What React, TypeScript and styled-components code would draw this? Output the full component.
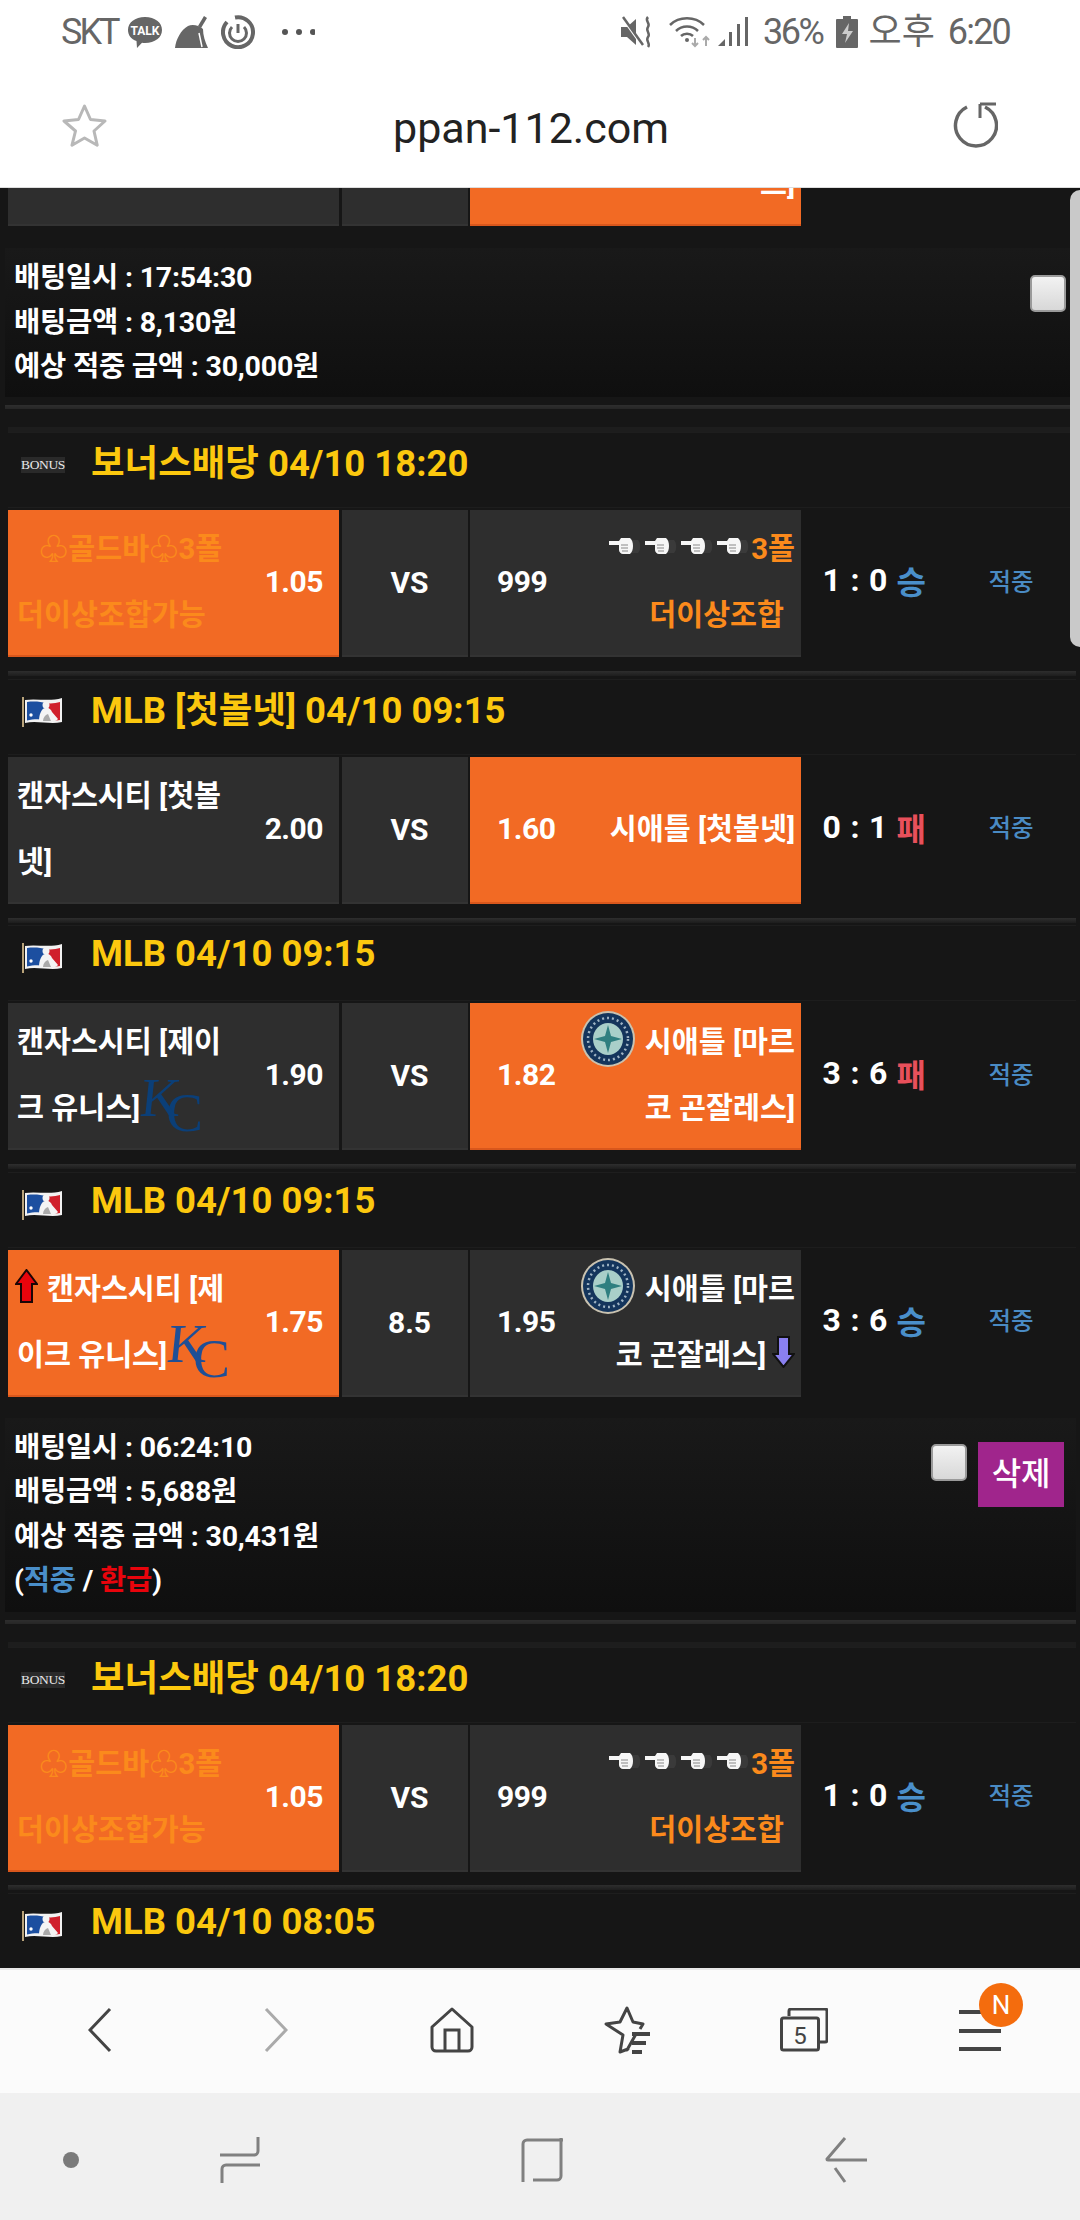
import React from "react";
import styled, { createGlobalStyle } from "styled-components";

const Global = createGlobalStyle`
  html, body { margin: 0; padding: 0; background: #161616; }
  * { box-sizing: border-box; }
  #root { width: 1080px; height: 2220px; overflow: hidden; }
`;

const Screen = styled.div`
  width: 1080px;
  height: 2220px;
  display: flex;
  flex-direction: column;
  font-family: Roboto, "Noto Sans CJK KR", sans-serif;
  overflow: hidden;
  position: relative;
`;
const Ic = styled.svg<{ $ml?: number; $mr?: number }>`
  display: block;
  flex: none;
  margin-left: ${(p) => p.$ml ?? 0}px;
  margin-right: ${(p) => p.$mr ?? 0}px;
`;
const StatusBar = styled.div`
  height: 66px;
  flex: none;
  background: #fff;
  color: #666;
  display: flex;
  justify-content: space-between;
  align-items: center;
  padding: 0 70px 2px 61px;
  font-size: 36px;
  font-weight: 400;
`;
const StatusGroup = styled.div`
  display: flex;
  align-items: center;
`;
const StatusText = styled.span<{ $ml?: number; $ls?: number }>`
  letter-spacing: ${(p) => p.$ls ?? -2.4}px;
  line-height: 40px;
  margin-left: ${(p) => p.$ml ?? 0}px;
`;
const UrlBar = styled.div`
  height: 122px;
  flex: none;
  background: #fff;
  display: grid;
  grid-template-columns: 62px 45px 1fr 45px 82px;
  align-items: center;
  border-bottom: 1px solid #ddd;
  padding-bottom: 3px;
`;
const UrlText = styled.div`
  text-align: center;
  color: #222;
  font-size: 43px;
  padding: 5px 0 0 2px;
`;
const Spacer = styled.span``;
const Scroll = styled.div`
  flex: 1;
  background: #161616;
  overflow: hidden;
  min-height: 0;
  position: relative;
`;
const ScrollTrack = styled.div`
  margin-top: -109px;
  padding-left: 8px;
  padding-right: 7px;
`;
const Thumb = styled.div`
  position: absolute;
  top: 2px;
  right: 0;
  width: 10px;
  height: 457px;
  background: #c9c9c9;
  border-radius: 12px 0 0 12px;
`;
const Row = styled.div`
  display: grid;
  grid-template-columns: 331px 126px 331px 1fr;
  column-gap: 2.5px;
  height: 147px;
  color: #fff;
  font-weight: 700;
  font-size: 30px;
`;
const Team = styled.div<{ $on?: boolean; $right?: boolean }>`
  background: ${(p) => (p.$on ? "#f26a24" : "#2e2e2e")};
  border-bottom: 2px solid ${(p) => (p.$on ? "#d9571c" : "#333")};
  display: flex;
  align-items: center;
  justify-content: space-between;
  flex-direction: ${(p) => (p.$right ? "row-reverse" : "row")};
  padding: 0 ${(p) => (p.$right ? "6px" : "16px")} 0 ${(p) => (p.$right ? "27px" : "9px")};
`;
const Mid = styled.div`
  background: #2e2e2e;
  border-bottom: 2px solid #333;
  display: flex;
  align-items: center;
  justify-content: center;
  padding-left: 10px;
`;
const Name = styled.div<{ $right?: boolean }>`
  display: flex;
  flex-direction: column;
  align-items: ${(p) => (p.$right ? "flex-end" : "flex-start")};
  font-size: 29.300px;
  white-space: nowrap;
  padding-bottom: 7px;
`;
const NameLine = styled.div<{ $indent?: number; $tail?: number; $gold?: boolean }>`
  display: flex;
  align-items: center;
  height: 66px;
  margin-left: ${(p) => p.$indent ?? 0}px;
  margin-right: ${(p) => p.$tail ?? 0}px;
  color: ${(p) => (p.$gold ? "#fb8a1c" : "inherit")};
`;
const Odds = styled.div`
  letter-spacing: -0.5px;
  padding-bottom: 2px;
`;
const Score = styled.div`
  display: flex;
  align-items: center;
  padding: 0 0 7px 19px;
  font-size: 32px;
`;
const ScoreText = styled.span`
  width: 74px;
  white-space: nowrap;
  letter-spacing: 0.8px;
`;
const Outcome = styled.span<{ $win: boolean }>`
  width: 92px;
  color: ${(p) => (p.$win ? "#4a8fca" : "#e8505b")};
`;
const Hit = styled.span`
  color: #4a8bc4;
  font-size: 24.500px;
  font-weight: 500;
`;
const Header = styled.div`
  height: 76px;
  margin: 0 -3px 2px 0;
  background: #161616;
  border-top: 1px solid #1e1e1e;
  border-bottom: 1px solid #1d1d1d;
  display: flex;
  align-items: center;
  padding: 0 0 19px 13px;
  color: #fcc80e;
  font-size: 36.500px;
  font-weight: 700;
`;
const HeaderIcon = styled.span`
  width: 44px;
  margin-right: 26px;
  display: flex;
  justify-content: center;
`;
const FlagIcon = styled.span`
  display: flex;
  padding-top: 9px;
`;
const BonusBadge = styled.span`
  background: #2a2a2a;
  color: #e8e8e8;
  font-family: "Liberation Serif", serif;
  font-size: 13.500px;
  font-weight: 400;
  line-height: 16px;
  width: 45px;
  text-align: center;
  letter-spacing: -0.4px;
  margin-top: 9px;
`;
const Separator = styled.div<{ $above: number; $below: number }>`
  height: 5px;
  margin: ${(p) => p.$above}px -3px ${(p) => p.$below}px 0;
  background: linear-gradient(#2e2e2e, #1d1d1d);
`;
const PanelSeparator = styled.div`
  height: 4px;
  margin: 8px -3px 18px -3px;
  background: linear-gradient(#2e2e2e, #262626);
`;
const Faint = styled.div`
  height: 5px;
  margin-right: -3px;
  background: #1d1d1d;
`;
const Panel = styled.div<{ $h: number; $top: number }>`
  height: ${(p) => p.$h}px;
  background: linear-gradient(#191919, #0f0f0f);
  color: #fff;
  font-size: 28.500px;
  font-weight: 700;
  line-height: 44.600px;
  padding: 7px 12px 0 9px;
  margin: ${(p) => p.$top}px -3px 0 -3px;
  display: flex;
  justify-content: space-between;
  letter-spacing: -0.2px;
`;
const PanelText = styled.div`
  padding-top: 1px;
`;
const PanelGroup = styled.div`
  display: flex;
  align-items: flex-start;
  gap: 11px;
  padding-top: 18px;
`;
const CheckBox = styled.div<{ $mr?: number }>`
  width: 36px;
  height: 37px;
  margin-top: 1.500px;
  margin-right: ${(p) => p.$mr ?? 0}px;
  background: linear-gradient(#f2f2f2, #d8d8d8);
  border: 2px solid #9a9a9a;
  border-radius: 5px;
`;
const DeleteBtn = styled.div`
  width: 86px;
  height: 65px;
  margin-top: -1px;
  background: #a0258c;
  color: #fff;
  font-size: 32px;
  font-weight: 500;
  display: flex;
  align-items: center;
  justify-content: center;
`;
const Link = styled.span<{ $c: string }>`
  color: ${(p) => p.$c};
`;
const KCMark = styled.span<{ $c: string }>`
  display: flex;
  width: 57px;
  height: 53px;
  font-family: "Liberation Serif", serif;
  font-size: 55px;
  font-weight: 400;
  line-height: 38px;
  color: ${(p) => p.$c};
`;
const KLetter = styled.span`
  width: 26px;
  transform: skewX(-6deg);
`;
const CLetter = styled.span`
  padding-top: 15px;
`;
const LogoSlot = styled.span`
  display: flex;
  margin-right: 10px;
`;
const Hands = styled.span`
  display: inline-flex;
  gap: 4px;
  margin-right: 2px;
`;
const Nav = styled.div`
  height: 125px;
  flex: none;
  background: #fbfbfb;
  border-top: 2px solid #e8e8e8;
  display: grid;
  grid-template-columns: repeat(6, 176px);
  padding: 0 0 3px 12px;
  align-items: center;
  justify-items: center;
`;
const MenuWrap = styled.div`
  position: relative;
  width: 42px;
  height: 44px;
`;
const Badge = styled.span`
  position: absolute;
  left: 20px;
  top: -25px;
  width: 44px;
  height: 44px;
  border-radius: 50%;
  background: #f46c0d;
  color: #fff;
  font-size: 26px;
  display: flex;
  align-items: center;
  justify-content: center;
`;
const SysNav = styled.div`
  height: 127px;
  flex: none;
  background: #f0f0f0;
  display: flex;
  align-items: center;
  padding: 7px 0 0 63px;
`;

const Flag = () => (
  <svg width="42" height="30" viewBox="0 0 42 30">
    <rect x="0" y="0" width="2" height="30" fill="#b9a37a" />
    <path d="M3 3c12-2 24 2 37-2v24c-12 3-25-2-37 1z" fill="#f2f2f2" />
    <path d="M5 5c8-1 14 0 19 1v17c-6-1-13-1-19 .5z" fill="#1c4fa0" />
    <path d="M24 6c5 1 10 0 14-1v18c-5 1-9 1-14 0z" fill="#d0202c" />
    <circle cx="9" cy="18" r="1.700" fill="#fff" />
    <circle cx="24" cy="8" r="3.500" fill="#f4f4f4" />
    <path d="M17 24c0-6 2-12 6-13 3-1 6 1 7 4l6 7c-1 1-2 2-3 2z" fill="#f4f4f4" />
    <path d="M21 24c0-3 2-6 5-7l3 7z" fill="#aaa" />
  </svg>
);
const Mariners = () => (
  <svg width="54" height="56" viewBox="0 0 54 56">
    <ellipse cx="27" cy="28" rx="27" ry="28" fill="#c9c2b0" />
    <ellipse cx="27" cy="28" rx="25" ry="26" fill="#14355c" />
    <ellipse cx="27" cy="28" rx="15" ry="16" fill="#a9cfc9" />
    <path d="M27 14l3 11 11 3-11 3-3 11-3-11-11-3 11-3z" fill="#2f7f80" />
    <ellipse cx="27" cy="28" rx="20" ry="21" fill="none" stroke="#9fb4c4" strokeWidth="2.500" strokeDasharray="2 3" />
  </svg>
);
const Hand = () => (
  <svg width="32" height="18" viewBox="0 0 32 18">
    <path d="M22 3h7c3 3 3 10 0 13h-7z" fill="#3a3a3a" />
    <path d="M0 4h10l2-3h9c4 3 4 13 0 16h-7c-2 0-4-2-4-4V8H0z" fill="#f6f6f6" />
    <path d="M12 8h7M12 11h7M13 14h6" stroke="#888" strokeWidth="1" fill="none" />
  </svg>
);
const UpArrow = () => (
  <Ic width="23" height="34" viewBox="0 0 23 34" $mr={9}>
    <path d="M11.500 1L22 15h-5v18H6V15H1z" fill="#e8040c" stroke="#1a0606" strokeWidth="2" />
  </Ic>
);
const DownArrow = () => (
  <Ic width="23" height="32" viewBox="0 0 23 32" $ml={6}>
    <path d="M6 1h11v17h5L11.500 31 1 18h5z" fill="#8a80f0" stroke="#111" strokeWidth="2" />
  </Ic>
);
const KC = ({ c }: { c: string }) => (
  <KCMark $c={c}>
    <KLetter>K</KLetter>
    <CLetter>C</CLetter>
  </KCMark>
);

type TeamCfg = { on?: boolean; right?: boolean; odds: string; lines?: React.ReactNode };
const TeamCell = ({ on, right, odds, lines }: TeamCfg) => (
  <Team $on={on} $right={right}>
    <Name $right={right}>{lines}</Name>
    <Odds>{odds}</Odds>
  </Team>
);

const Match = ({
  left,
  mid,
  right,
  score,
  win,
}: {
  left: TeamCfg;
  mid?: string;
  right: TeamCfg;
  score?: string;
  win?: boolean;
}) => (
  <Row>
    <TeamCell {...left} />
    <Mid>{mid}</Mid>
    <TeamCell {...right} right />
    {score ? (
      <Score>
        <ScoreText>{score}</ScoreText>
        <Outcome $win={!!win}>{win ? "승" : "패"}</Outcome>
        <Hit>적중</Hit>
      </Score>
    ) : (
      <Spacer />
    )}
  </Row>
);

const BonusMatch = () => (
  <Match
    left={{
      on: true,
      odds: "1.05",
      lines: (
        <>
          <NameLine $gold $indent={22}>♧골드바♧3폴</NameLine>
          <NameLine $gold>더이상조합가능</NameLine>
        </>
      ),
    }}
    mid="VS"
    right={{
      odds: "999",
      lines: (
        <>
          <NameLine $gold>
            <Hands>
              <Hand />
              <Hand />
              <Hand />
              <Hand />
            </Hands>
            3폴
          </NameLine>
          <NameLine $gold $tail={11}>더이상조합</NameLine>
        </>
      ),
    }}
    score="1 : 0"
    win
  />
);

const MlbHeader = ({ children }: { children: React.ReactNode }) => (
  <Header>
    <HeaderIcon>
      <FlagIcon>
        <Flag />
      </FlagIcon>
    </HeaderIcon>
    {children}
  </Header>
);
const BonusHeader = () => (
  <Header>
    <HeaderIcon>
      <BonusBadge>BONUS</BonusBadge>
    </HeaderIcon>
    보너스배당 04/10 18:20
  </Header>
);

export default function App() {
  return (
    <Screen>
      <Global />
      <StatusBar>
        <StatusGroup>
          <StatusText $ls={-3}>SKT</StatusText>
          <Ic width="36" height="33" viewBox="0 0 36 33" $ml={10}>
            <path d="M18 1c10 0 17 5.500 17 13S28 27 18 27c-1 0-2 0-3-.2L10 32l-.5-7C4 23 1 19 1 14 1 6.500 8 1 18 1z" fill="#666" />
            <text x="18" y="18.500" textAnchor="middle" fontFamily="Roboto" fontWeight="700" fontSize="12" fill="#fff">TALK</text>
          </Ic>
          <Ic width="36" height="34" viewBox="0 0 36 34" $ml={11}>
            <path d="M30 1l3 2-6 10-3-2z" fill="#666" />
            <path d="M14 11c4-2 11-1 15 3 0 6 2 13 5 19H1c1-9 6-18 13-22z" fill="#666" />
            <path d="M25 18l3 14" stroke="#fff" strokeWidth="1.500" />
          </Ic>
          <Ic width="34" height="34" viewBox="0 0 34 34" fill="none" stroke="#666" strokeWidth="4" $ml={11}>
            <path d="M6 7a15 15 0 1 0 8-4.500" />
            <path d="M11 12a8.500 8.500 0 1 0 12 0" strokeWidth="3" />
            <path d="M17 9v9" strokeWidth="3" />
          </Ic>
          <Ic width="34" height="8" viewBox="0 0 34 8" fill="#555" $ml={26}>
            <circle cx="4" cy="4" r="3" />
            <circle cx="18" cy="4" r="3" />
            <circle cx="32" cy="4" r="3" />
          </Ic>
        </StatusGroup>
        <StatusGroup>
          <Ic width="33" height="32" viewBox="0 0 33 32" fill="#666">
            <path d="M0 11h6l9-8v26l-9-8H0z" />
            <path d="M1 1l20 28" stroke="#fff" strokeWidth="3" />
            <path d="M2 1l20 28" stroke="#666" strokeWidth="2.500" />
            <path d="M27 1c-4 4 3 6 0 10s3 6 0 10 3 6 0 10" fill="none" stroke="#666" strokeWidth="2.500" />
          </Ic>
          <Ic width="42" height="32" viewBox="0 0 42 32" fill="none" stroke="#666" strokeWidth="2.500" $ml={15}>
            <path d="M1 9c9-9 25-9 34 0" />
            <path d="M7 15c6-6 16-6 22 0" />
            <path d="M12 20c3-3 9-3 12 0" />
            <circle cx="18" cy="24" r="2" fill="#666" stroke="none" />
            <path d="M26 22v8M23 27l3 3 3-3" stroke="#aaa" strokeWidth="2" />
            <path d="M37 30v-9M34 24l3-3 3 3" stroke="#aaa" strokeWidth="2" />
          </Ic>
          <Ic width="32" height="32" viewBox="0 0 32 32" fill="#666" $ml={6}>
            <path d="M1 30l7-7v7z" />
            <rect x="12" y="16" width="3" height="14" />
            <rect x="20" y="8" width="3" height="22" />
            <rect x="28" y="1" width="3" height="29" />
          </Ic>
          <StatusText $ml={14}>36%</StatusText>
          <Ic width="22" height="32" viewBox="0 0 22 32" fill="#666" $ml={13}>
            <rect x="7" y="0" width="8" height="3" />
            <rect x="0" y="3" width="22" height="29" rx="1" />
            <path d="M13 7l-7 11h5l-2 9 8-12h-5z" fill="#ccc" />
          </Ic>
          <StatusText $ml={11} $ls={0}>오후</StatusText>
          <StatusText $ml={13} $ls={-1.800}>6:20</StatusText>
        </StatusGroup>
      </StatusBar>
      <UrlBar>
        <Spacer />
        <Ic width="45" height="44" viewBox="0 0 45 44" fill="none" stroke="#b8b8b8" strokeWidth="3">
          <path d="M22.500 3l6 13.500 14.500 1.500-11 10 3.200 14.200L22.500 35 10 42.200 13.500 28 2 18l14.500-1.500z" strokeLinejoin="round" />
        </Ic>
        <UrlText>ppan-112.com</UrlText>
        <Ic width="45" height="46" viewBox="0 0 45 46" fill="none" stroke="#666" strokeWidth="3.500">
          <path d="M14 5A20.500 20.500 0 1 0 32 5" />
          <path d="M27 2h16M27 2v14" strokeWidth="3" />
        </Ic>
      </UrlBar>
      <Scroll>
        <ScrollTrack>
          <Match
            left={{ odds: "" }}
            right={{
              on: true,
              odds: "",
              lines: (
                <>
                  <NameLine />
                  <NameLine>스]</NameLine>
                </>
              ),
            }}
          />
          <Panel $h={149} $top={22}>
            <PanelText>
              <div>배팅일시 : 17:54:30</div>
              <div>배팅금액 : 8,130원</div>
              <div>예상 적중 금액 : 30,000원</div>
            </PanelText>
            <PanelGroup>
              <CheckBox $mr={-2} />
            </PanelGroup>
          </Panel>
          <PanelSeparator />
          <Faint />
          <BonusHeader />
          <BonusMatch />
          <Separator $above={14} $below={2.5} />
          <MlbHeader>MLB [첫볼넷] 04/10 09:15</MlbHeader>
          <Match
            left={{
              odds: "2.00",
              lines: (
                <>
                  <NameLine>캔자스시티 [첫볼</NameLine>
                  <NameLine>넷]</NameLine>
                </>
              ),
            }}
            mid="VS"
            right={{ on: true, odds: "1.60", lines: <NameLine>시애틀 [첫볼넷]</NameLine> }}
            score="0 : 1"
          />
          <Separator $above={14} $below={2.5} />
          <MlbHeader>MLB 04/10 09:15</MlbHeader>
          <Match
            left={{
              odds: "1.90",
              lines: (
                <>
                  <NameLine>캔자스시티 [제이</NameLine>
                  <NameLine>
                    크 유니스]
                    <KC c="#0b3f78" />
                  </NameLine>
                </>
              ),
            }}
            mid="VS"
            right={{
              on: true,
              odds: "1.82",
              lines: (
                <>
                  <NameLine>
                    <LogoSlot>
                      <Mariners />
                    </LogoSlot>
                    시애틀 [마르
                  </NameLine>
                  <NameLine>코 곤잘레스]</NameLine>
                </>
              ),
            }}
            score="3 : 6"
          />
          <Separator $above={14} $below={2.5} />
          <MlbHeader>MLB 04/10 09:15</MlbHeader>
          <Match
            left={{
              on: true,
              odds: "1.75",
              lines: (
                <>
                  <NameLine $indent={-2}>
                    <UpArrow />
                    캔자스시티 [제
                  </NameLine>
                  <NameLine>
                    이크 유니스]
                    <KC c="#1f4f96" />
                  </NameLine>
                </>
              ),
            }}
            mid="8.5"
            right={{
              odds: "1.95",
              lines: (
                <>
                  <NameLine>
                    <LogoSlot>
                      <Mariners />
                    </LogoSlot>
                    시애틀 [마르
                  </NameLine>
                  <NameLine>
                    코 곤잘레스]
                    <DownArrow />
                  </NameLine>
                </>
              ),
            }}
            score="3 : 6"
            win
          />
          <Panel $h={194} $top={21}>
            <PanelText>
              <div>배팅일시 : 06:24:10</div>
              <div>배팅금액 : 5,688원</div>
              <div>예상 적중 금액 : 30,431원</div>
              <div>
                (<Link $c="#4a8fca">적중</Link> / <Link $c="#e8040c">환급</Link>)
              </div>
            </PanelText>
            <PanelGroup>
              <CheckBox />
              <DeleteBtn>삭제</DeleteBtn>
            </PanelGroup>
          </Panel>
          <PanelSeparator />
          <Faint />
          <BonusHeader />
          <BonusMatch />
          <Separator $above={13.5} $below={3} />
          <MlbHeader>MLB 04/10 08:05</MlbHeader>
        </ScrollTrack>
        <Thumb />
      </Scroll>
      <Nav>
        <Ic width="24" height="46" viewBox="0 0 24 46" fill="none" stroke="#444" strokeWidth="3">
          <path d="M22 2L2 23l20 21" />
        </Ic>
        <Ic width="24" height="46" viewBox="0 0 24 46" fill="none" stroke="#aaa" strokeWidth="3">
          <path d="M2 2l20 21L2 44" />
        </Ic>
        <Ic width="44" height="46" viewBox="0 0 44 46" fill="none" stroke="#444" strokeWidth="3">
          <path d="M22 2L2 20v20a4 4 0 0 0 4 4h32a4 4 0 0 0 4-4V20z" strokeLinejoin="round" />
          <path d="M15 44V23h14v21" />
        </Ic>
        <Ic width="48" height="48" viewBox="0 0 48 48" fill="none" stroke="#444" strokeWidth="3">
          <path d="M32 28l-9 16 1-1-8 3 3-17L2 18l14-2 7-14 6 14 10 2-3 5" strokeLinejoin="round" />
          <path d="M28 28h18M28 37h14M28 46h10" strokeWidth="4" />
        </Ic>
        <Ic width="48" height="44" viewBox="0 0 48 44" fill="none" stroke="#444" strokeWidth="3">
          <path d="M9 8V3a2 2 0 0 1 2-2h34a2 2 0 0 1 2 2v29a2 2 0 0 1-2 2h-5" />
          <rect x="1.500" y="10" width="37" height="32" rx="2" />
          <text x="20" y="36" textAnchor="middle" fontFamily="Roboto" fontSize="24" fill="#444" stroke="none">5</text>
        </Ic>
        <MenuWrap>
          <Ic width="42" height="44" viewBox="0 0 42 44" fill="#444">
            <rect y="2" width="42" height="4" />
            <rect y="21" width="42" height="4" />
            <rect y="39" width="42" height="4" />
          </Ic>
          <Badge>N</Badge>
        </MenuWrap>
      </Nav>
      <SysNav>
        <Ic width="16" height="16" viewBox="0 0 16 16" fill="#7a7a7a">
          <circle cx="8" cy="8" r="8" />
        </Ic>
        <Ic width="40" height="46" viewBox="0 0 40 46" fill="none" stroke="#808080" strokeWidth="3" $ml={141}>
          <path d="M38 0v14a4 4 0 0 1-4 4H0" />
          <path d="M2 46V32a4 4 0 0 1 4-4h34" />
        </Ic>
        <Ic width="42" height="44" viewBox="0 0 42 44" fill="none" stroke="#808080" strokeWidth="3" $ml={261}>
          <path d="M2 44V6a4 4 0 0 1 4-4h36" />
          <path d="M40 0v38a4 4 0 0 1-4 4H12" />
        </Ic>
        <Ic width="42" height="46" viewBox="0 0 42 46" fill="none" stroke="#808080" strokeWidth="3" $ml={262}>
          <path d="M20 1L2 22a1 1 0 0 0 1 1h39" />
          <path d="M10 31l10 14" />
        </Ic>
      </SysNav>
    </Screen>
  );
}
